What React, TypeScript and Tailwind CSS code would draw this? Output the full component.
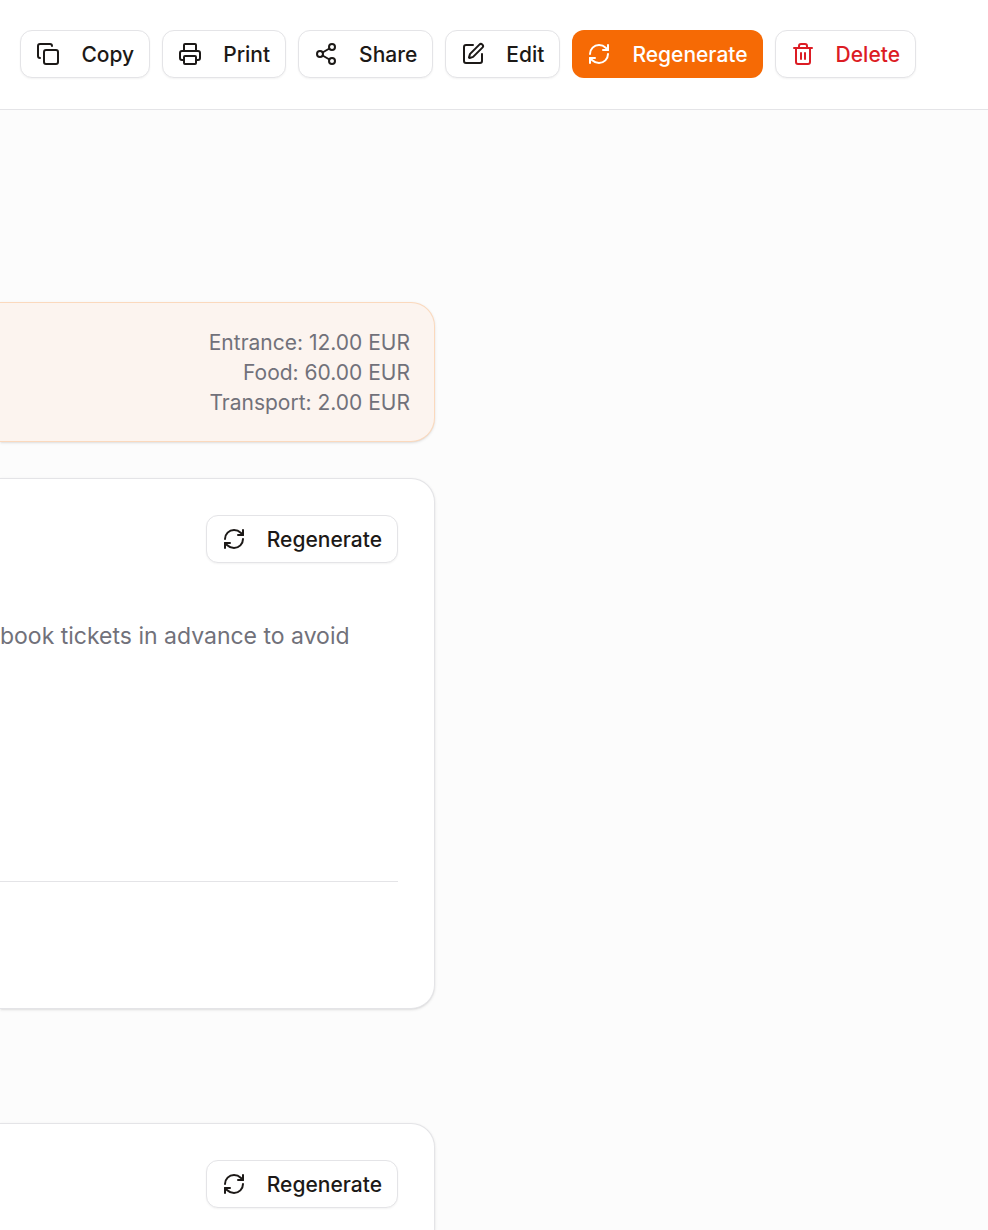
import React from 'react';
import { Copy, Printer, RefreshCw, Share2, SquarePen, Trash2, type LucideIcon } from 'lucide-react';

type Variant = 'outline' | 'primary' | 'danger';

interface ActionButtonProps {
    icon: LucideIcon;
    label: string;
    variant?: Variant;
}

const variants: Record<Variant, string> = {
    outline: 'border border-[#e4e4e7] bg-white text-[#1c1917] shadow-xs',
    primary: 'bg-[#f66a05] text-white',
    danger: 'border border-[#e4e4e7] bg-white text-[#dc1c24] shadow-xs',
};

const ActionButton: React.FC<ActionButtonProps> = ({ icon: Icon, label, variant = 'outline' }) => (
    <button
        type="button"
        className={`flex h-12 shrink-0 items-center gap-[21px] rounded-xl px-[15px] text-[21px] leading-[30px] font-medium ${variants[variant]}`}
    >
        <Icon size={24} aria-hidden="true" />
        <span className="pt-0.5">{label}</span>
    </button>
);

const costs = [
    { label: 'Entrance', amount: '12.00 EUR' },
    { label: 'Food', amount: '60.00 EUR' },
    { label: 'Transport', amount: '2.00 EUR' },
];

const App: React.FC = () => (
    <div className="min-h-screen overflow-x-hidden bg-[#fcfcfc] font-['Inter',sans-serif]">
        <header className="flex justify-end gap-3 border-b border-[#e4e4e7] bg-white pt-[30px] pr-18 pb-[31px]">
            <ActionButton icon={Copy} label="Copy" />
            <ActionButton icon={Printer} label="Print" />
            <ActionButton icon={Share2} label="Share" />
            <ActionButton icon={SquarePen} label="Edit" />
            <ActionButton icon={RefreshCw} label="Regenerate" variant="primary" />
            <ActionButton icon={Trash2} label="Delete" variant="danger" />
        </header>

        <main className="grid grid-cols-[minmax(0,1fr)_553px] pt-48">
            <div className="flex flex-col">
                <ul className="rounded-r-3xl border border-l-0 border-[#fbd9bd] bg-[#fcf4ef] pt-[25px] pr-6 pb-[23px] text-right text-[21px] leading-[30px] text-[#71717a] shadow-sm">
                    {costs.map((cost) => (
                        <li key={cost.label}>
                            {cost.label}: {cost.amount}
                        </li>
                    ))}
                </ul>

                <section className="mt-9 rounded-r-3xl border border-l-0 border-[#e4e4e7] bg-white pt-9 pr-9 pb-[126px] shadow-sm">
                    <div className="flex justify-end">
                        <ActionButton icon={RefreshCw} label="Regenerate" />
                    </div>
                    <p className="mt-[55px] border-b border-[#e4e4e7] pb-[227px] text-[23px] leading-9 text-[#71717a]">
                        book tickets in advance to avoid
                    </p>
                </section>

                <section className="mt-[114px] rounded-tr-3xl border-t border-r border-[#e4e4e7] bg-white pt-9 pr-9 pb-[22px] shadow-sm">
                    <div className="flex justify-end">
                        <ActionButton icon={RefreshCw} label="Regenerate" />
                    </div>
                </section>
            </div>
        </main>
    </div>
);

export default App;
